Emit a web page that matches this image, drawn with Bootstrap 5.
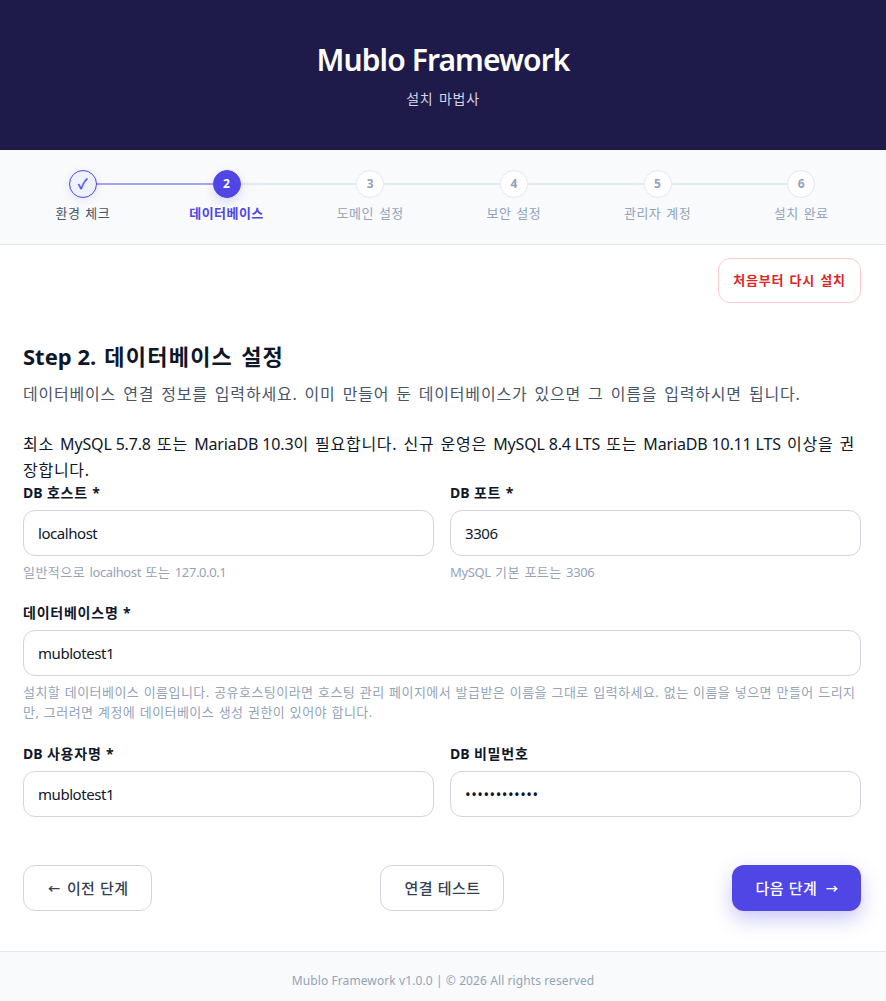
<!DOCTYPE html>
<html lang="ko">
<head>
<meta charset="utf-8">
<title>Mublo Framework</title>
<link rel="stylesheet" href="https://cdn.jsdelivr.net/npm/bootstrap@5.3.0/dist/css/bootstrap.min.css">
<style>
body{font-family:"Noto Sans","Noto Sans CJK KR",sans-serif;color:#0f172a;background:#fff;font-size:15px;letter-spacing:.03em;word-spacing:.08em}
.lt{letter-spacing:0;word-spacing:0}
.hero{background:#1e1b4b;height:150px;color:#fff;padding-top:38px}
.hero h1{font-size:30px;font-weight:600;line-height:44px;margin:0;letter-spacing:-.03em;word-spacing:0}
.hero p{font-size:14px;line-height:21px;margin:6px 0 0;color:#d4d4e4;letter-spacing:.05em}
.stepper{background:#f8fafc;border-bottom:1px solid #e2e8f0;height:95px;padding:20px 13px 0 11px}
.stp{flex:1 1 0;position:relative;font-size:13px;color:#94a3b8;line-height:20px}
.stp::after{content:"";position:absolute;left:50%;width:100%;top:13px;height:2px;background:#e2e8f0}
.stp:last-child::after{display:none}
.stp.done::after{background:#a8a2f6}
.stp .dot{width:28px;height:28px;border-radius:50%;background:#fff;border:1.5px solid #e2e8f0;font-size:12px;font-weight:700;position:relative;z-index:1;margin-bottom:5px;letter-spacing:0}
.stp.done .dot{border-color:#4f46e5;background:#eef2ff;color:#4f46e5;font-size:14px;font-weight:400;-webkit-text-stroke:.4px #4f46e5;box-shadow:0 2px 8px rgba(79,70,229,.12)}
.stp.done{color:#475569}
.stp.now .dot{border-color:#4f46e5;background:#4f46e5;color:#fff;box-shadow:0 4px 10px rgba(79,70,229,.18)}
.stp.now{color:#4f46e5;font-weight:700}
.main{padding:13px 25px 0 23px}
.btn-reset{border:1px solid #fecaca;color:#dc2626;background:#fff;font-size:13px;font-weight:700;border-radius:12px;width:143px;height:45px;padding:0;letter-spacing:.06em;word-spacing:.08em}
.main h2{font-size:22px;font-weight:700;line-height:32px;margin:37px 0 0;letter-spacing:.055em}
.desc{font-size:16px;line-height:25.6px;margin:10px 0 0;color:#475569;letter-spacing:.05em;word-spacing:.13em}
.req{font-size:16px;line-height:25.6px;margin:24.4px 0 -1px;color:#0f172a;letter-spacing:.046em;word-spacing:.08em}
.req .lt{letter-spacing:-.01em}
.form-label{font-size:14px;font-weight:700;line-height:20px;padding-top:1px;margin-bottom:7px;display:block;letter-spacing:.055em;word-spacing:0}
.form-control{height:46px;border:1px solid #d4d4dd;border-radius:12px;font-size:15px;padding:0 14px;color:#0f172a;letter-spacing:-.03em}
.form-control[type=password]{letter-spacing:.033em}
.hint{font-size:13px;line-height:20px;color:#94a3b8;margin-top:6px;letter-spacing:.035em;word-spacing:.05em}
.hint .lt{letter-spacing:-.03em}
.gap1{margin-top:20px}
.gap2{margin-top:21px}
.actions{margin-top:48px;margin-bottom:40px}
.act{height:46px;border-radius:12px;font-size:15px;font-weight:500;padding:0 23px 0 24px;letter-spacing:.025em;word-spacing:.04em}
.arw{font-size:12px;letter-spacing:0;font-weight:700}
.arw-l{margin-right:2px}
.arw-r{margin-left:4px}
.act-l{border:1px solid #d4d4dd;background:#fff;color:#334155}
.act-p{background:#4f46e5;color:#fff;border:0;box-shadow:0 8px 20px rgba(79,70,229,.3)}
.foot{background:#f8fafc;border-top:1px solid #e2e8f0;height:50px;font-size:12px;color:#94a3b8;letter-spacing:.008em;word-spacing:0;padding-top:8px}
</style>
</head>
<body>
<header class="hero text-center">
<h1>Mublo Framework</h1>
<p>설치 마법사</p>
</header>
<nav class="stepper d-flex">
<div class="stp done d-flex flex-column align-items-center"><span class="dot d-flex align-items-center justify-content-center">✓</span><span>환경 체크</span></div>
<div class="stp now d-flex flex-column align-items-center"><span class="dot d-flex align-items-center justify-content-center">2</span><span>데이터베이스</span></div>
<div class="stp d-flex flex-column align-items-center"><span class="dot d-flex align-items-center justify-content-center">3</span><span>도메인 설정</span></div>
<div class="stp d-flex flex-column align-items-center"><span class="dot d-flex align-items-center justify-content-center">4</span><span>보안 설정</span></div>
<div class="stp d-flex flex-column align-items-center"><span class="dot d-flex align-items-center justify-content-center">5</span><span>관리자 계정</span></div>
<div class="stp d-flex flex-column align-items-center"><span class="dot d-flex align-items-center justify-content-center">6</span><span>설치 완료</span></div>
</nav>
<main class="main">
<div class="d-flex justify-content-end"><button class="btn btn-reset" type="button">처음부터 다시 설치</button></div>
<h2><span class="lt">Step 2.</span> 데이터베이스 설정</h2>
<p class="desc">데이터베이스 연결 정보를 입력하세요. 이미 만들어 둔 데이터베이스가 있으면 그 이름을 입력하시면 됩니다.</p>
<p class="req">최소 <span class="lt">MySQL 5.7.8</span> 또는 <span class="lt">MariaDB 10.3</span>이 필요합니다. 신규 운영은 <span class="lt">MySQL 8.4 LTS</span> 또는 <span class="lt">MariaDB 10.11 LTS</span> 이상을 권<br>장합니다.</p>
<form>
<div class="row gx-3">
<div class="col-6"><label class="form-label"><span class="lt">DB</span> 호스트 *</label><input class="form-control" value="localhost"><div class="hint">일반적으로 <span class="lt">localhost</span> 또는 <span class="lt">127.0.0.1</span></div></div>
<div class="col-6"><label class="form-label"><span class="lt">DB</span> 포트 *</label><input class="form-control" value="3306"><div class="hint"><span class="lt">MySQL</span> 기본 포트는 <span class="lt">3306</span></div></div>
</div>
<div class="gap1"><label class="form-label">데이터베이스명 *</label><input class="form-control" value="mublotest1"><div class="hint">설치할 데이터베이스 이름입니다. 공유호스팅이라면 호스팅 관리 페이지에서 발급받은 이름을 그대로 입력하세요. 없는 이름을 넣으면 만들어 드리지만, 그러려면 계정에 데이터베이스 생성 권한이 있어야 합니다.</div></div>
<div class="row gx-3 gap2">
<div class="col-6"><label class="form-label"><span class="lt">DB</span> 사용자명 *</label><input class="form-control" value="mublotest1"></div>
<div class="col-6"><label class="form-label"><span class="lt">DB</span> 비밀번호</label><input class="form-control" type="password" value="mublotest123"></div>
</div>
<div class="d-flex justify-content-between actions">
<button class="btn act act-l" type="button"><span class="arw arw-l">←</span> 이전 단계</button>
<button class="btn act act-l" type="button">연결 테스트</button>
<button class="btn act act-p" type="button">다음 단계 <span class="arw arw-r">→</span></button>
</div>
</form>
</main>
<footer class="foot d-flex align-items-center justify-content-center">Mublo Framework v1.0.0 | © 2026 All rights reserved</footer>
<script src="https://cdn.jsdelivr.net/npm/bootstrap@5.3.0/dist/js/bootstrap.bundle.min.js"></script>
</body>
</html>
